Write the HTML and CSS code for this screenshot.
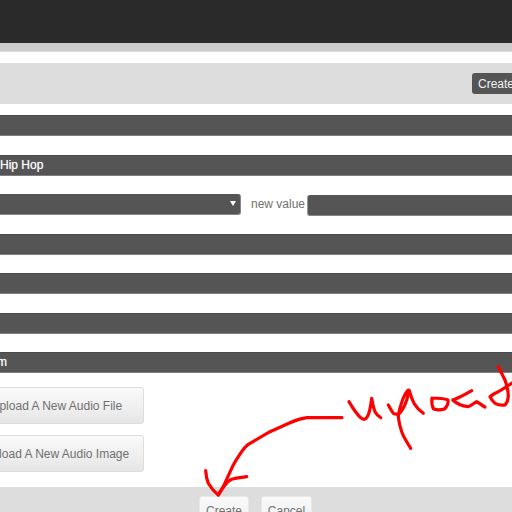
FILE: index.html
```html
<!DOCTYPE html>
<html lang="en">
<head>
<meta charset="utf-8">
<title>Create Audio</title>
<link rel="stylesheet" href="styles.css">
</head>
<body>
<div class="page">
  <header class="topbar"></header>
  <div class="subbar"></div>
  <div class="toolbar"><button class="btn-dark">Create</button></div>
  <form class="form">
    <div class="field"></div>
    <div class="field">Hip Hop</div>
    <div class="choice-row">
      <div class="select"><span class="caret"></span></div>
      <label class="new-label">new value</label>
      <div class="new-input"></div>
    </div>
    <div class="field"></div>
    <div class="field"></div>
    <div class="field"></div>
    <div class="field field-last"><span class="clipped">m</span></div>
    <div class="uploads">
      <button type="button" class="upload">Upload A New Audio File</button>
      <button type="button" class="upload">Upload A New Audio Image</button>
    </div>
    <div class="actions">
      <button type="button" class="action action-create">Create</button>
      <button type="button" class="action">Cancel</button>
    </div>
  </form>
  <svg class="scribble" viewBox="0 0 512 512" width="512" height="512" fill="none" stroke="#f00" stroke-width="3.2" stroke-linecap="round" stroke-linejoin="round">
    <path d="M342 417.7H307C300 418.5 296 420 290 422.7L270 431.7L248.3 444.3C245 447 243.5 449 241.7 451.7C237.5 458 234.5 462 231.7 468.3L223.3 486.7L218.3 495"/>
    <path d="M205.7 470.7C206 476 207 480 208.3 483.3C211 488 214.5 492 218.3 495C220.5 491 222.5 488 225 485C227 482 229 480.5 231.7 479.3C236 478 241 477.5 246.7 476.7"/>
    <path d="M349 401.7C351 405 354 410 356.7 413.3C359 416.5 361 419 364 419.3C367 419 368.5 415 369.5 411C370.5 407 371 403 371.7 398.3C372.5 403 373.5 408 375 411.7C376.5 414.5 378.5 416.5 380.7 417.7"/>
    <path d="M388.3 405C390 408 391.5 411 393.3 413.3C395.5 414.5 398 414.5 400 413C402.5 410 405 405 406.7 400C408 396 408.7 393 408.3 390C406 392 404.5 395 403.3 398C401 404 399 410 398.3 416.7C398.8 422 400 427 401.7 431.7C404 438 407.5 443 410.7 448.3"/>
    <path d="M409.3 390.7C410.5 395 412 399.5 414 403.3C417 408 420 411 423.3 413.3"/>
    <path d="M432 398C431.5 402 432 406 433.5 409C437 410 441 410 444.5 409C447 406.5 448.5 403 448 400C443 398 437 398 432 398"/>
    <path d="M453 400C459 398 466 394 471.7 390.7"/>
    <path d="M453 400C457 404 462 406 468 406.7C471 406 474 403 476.7 401.7C479.5 403 482 405.5 485 407"/>
    <path d="M498.3 366.7L505 380C507 386 508.5 391 508.3 396.7C508 400 507 403 505 405C501 405.5 498 405 495 403.3C492.5 401.5 491 399 490 396.7C492.5 394.5 495 393 498.3 391.7C503 389 507.5 386 512 383"/>
  </svg>
</div>
</body>
</html>
```
FILE: styles.css
```css
* { box-sizing: border-box; }
html, body { margin: 0; padding: 0; background: #fff; }
.page { position: relative; width: 512px; height: 512px; overflow: hidden; font-family: "Liberation Sans", Arial, sans-serif; font-size: 12px; }
.topbar { height: 43px; background: #2a2a2a; }
.subbar { height: 9px; background: #ccc; border-bottom: 1px solid #ddd; }
.toolbar { margin-top: 11px; height: 41px; background: #ddd; display: flex; align-items: center; justify-content: flex-end; }
.btn-dark { flex: none; width: 46px; margin-right: -6px; height: 21px; padding: 0 0 0 6px; text-align: left; background: #555; color: #f2f2f2; border: 0; border-radius: 3px; font: 12px "Liberation Sans", Arial, sans-serif; }
.form { display: flex; flex-direction: column; padding-top: 11px; }
.field { height: 21px; margin-bottom: 18.5px; background: #555; border-top: 1px solid #4a4a4a; border-bottom: 1px solid #808080; color: #fff; font-size: 12px; line-height: 19px; text-shadow: 0 0 1px rgba(255, 255, 255, 0.6); }
.field-last { margin-bottom: 14px; }
.clipped { display: block; margin-left: -3px; }
.choice-row { display: flex; align-items: flex-start; height: 21px; margin-bottom: 18.5px; }
.select { flex: none; width: 241px; height: 21px; background: #555; border-radius: 0 3px 3px 0; border-bottom: 1px solid #888; border-right: 1px solid #888; position: relative; }
.caret { position: absolute; right: 4px; top: 7px; border-left: 3px solid transparent; border-right: 3px solid transparent; border-top: 5px solid #fff; }
.new-label { flex: none; margin-left: 10px; width: 56px; padding-top: 3px; color: #707070; font-size: 12px; white-space: nowrap; }
.new-input { flex: 1; height: 21px; margin-top: 1px; background: #555; border-radius: 3px 0 0 3px; border-left: 1px solid #999; border-bottom: 1px solid #888; }
.uploads { display: flex; flex-direction: column; gap: 11px; height: 100px; margin-left: -31px; }
.upload { flex: none; width: 175px; height: 37px; margin: 0; padding: 0; background: linear-gradient(#fafafa, #e6e6e6); border: 1px solid #ddd; border-radius: 3px; color: #707070; font: 12px "Liberation Sans", Arial, sans-serif; white-space: nowrap; text-align: center; }
.actions { height: 25px; background: #ddd; display: flex; gap: 12px; padding: 9px 0 0 199px; }
.action { flex: none; height: 30px; width: 50px; padding: 0; background: linear-gradient(#fafafa, #eee); border: 1px solid #e8e8e8; border-radius: 3px; color: #707070; font: 12px "Liberation Sans", Arial, sans-serif; }
.action + .action { width: 51px; }
.scribble { position: absolute; left: 0; top: 0; pointer-events: none; }
```
